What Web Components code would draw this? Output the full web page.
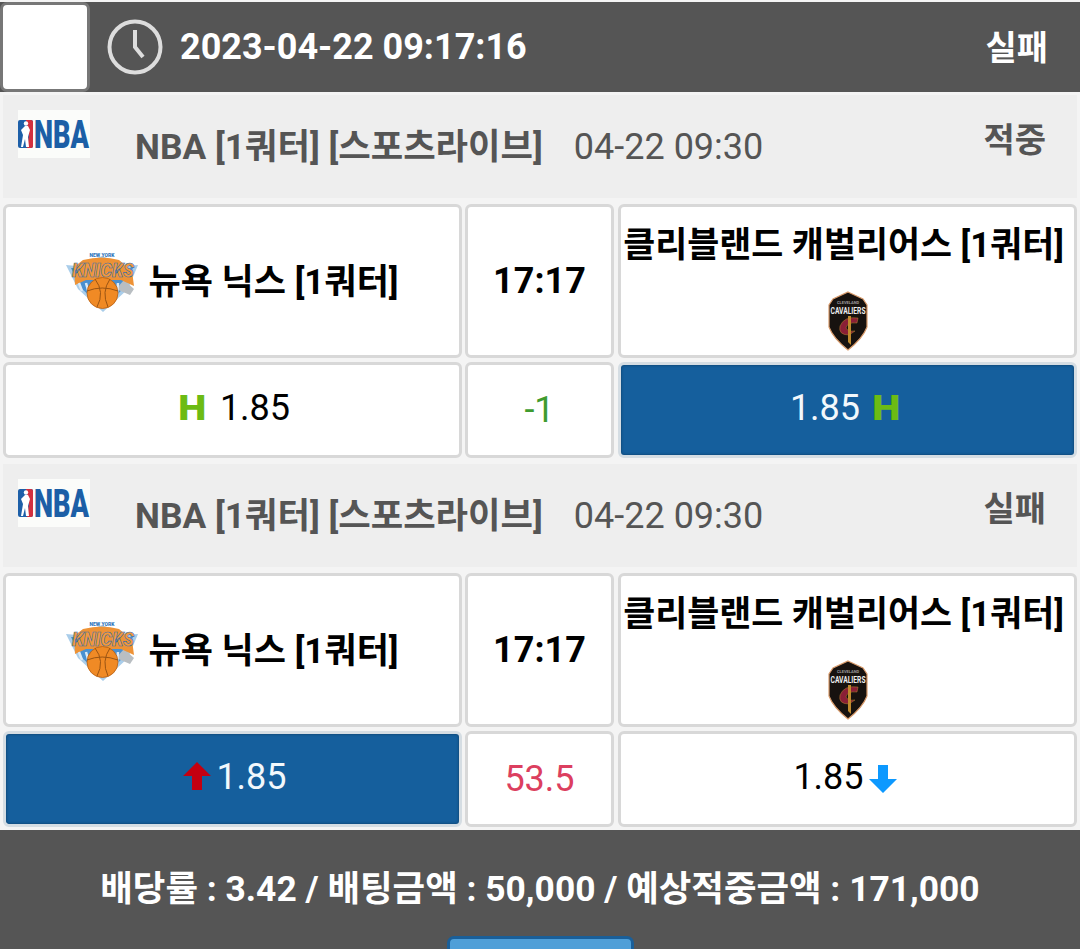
<!DOCTYPE html>
<html lang="ko">
<head>
<meta charset="utf-8">
<title>bet</title>
<style>
html, body { margin: 0; height: 949px; overflow: hidden; }
body {
  background: #f4f4f4;
  font-family: Roboto, "Noto Sans CJK KR", sans-serif;
  font-size: 35px;
}
</style>
</head>
<body>
<bet-header time="2023-04-22 09:17:16" status="실패"></bet-header>

<bet-game status="적중">
  <team-cell slot="home"><knicks-logo slot="logo"></knicks-logo>뉴욕 닉스 [1쿼터]</team-cell>
  <score-cell slot="mid" strong>17:17</score-cell>
  <team-cell slot="away" stacked><cavs-logo slot="logo"></cavs-logo>클리블랜드 캐벌리어스 [1쿼터]</team-cell>
  <odds-cell slot="odds-home"><mark-h></mark-h><span>1.85</span></odds-cell>
  <score-cell slot="odds-mid" color="#3f9b2f">-1</score-cell>
  <odds-cell slot="odds-away" selected><span>1.85</span><mark-h after></mark-h></odds-cell>
</bet-game>

<bet-game status="실패">
  <team-cell slot="home"><knicks-logo slot="logo"></knicks-logo>뉴욕 닉스 [1쿼터]</team-cell>
  <score-cell slot="mid" strong>17:17</score-cell>
  <team-cell slot="away" stacked><cavs-logo slot="logo"></cavs-logo>클리블랜드 캐벌리어스 [1쿼터]</team-cell>
  <odds-cell slot="odds-home" selected><mark-arrow dir="up"></mark-arrow><span>1.85</span></odds-cell>
  <score-cell slot="odds-mid" color="#dc3f5f">53.5</score-cell>
  <odds-cell slot="odds-away"><span>1.85</span><mark-arrow dir="down"></mark-arrow></odds-cell>
</bet-game>

<bet-footer>배당률 : 3.42 / 배팅금액 : 50,000 / 예상적중금액 : 171,000</bet-footer>

<script>
class BetHeader extends HTMLElement {
  constructor() {
    super();
    const shadowRoot = this.attachShadow({mode: 'open'});
    shadowRoot.innerHTML = `
<style>
:host {
  display: flex;
  align-items: center;
  box-sizing: border-box;
  height: 90px;
  margin-top: 2px;
  background-color: #555;
  color: #fff;
  font-weight: 700;
  padding-right: 32px;
}
#thumb {
  box-sizing: border-box;
  width: 90px;
  height: 90px;
  background: #fff;
  border: 3px solid #777;
  border-radius: 7px;
}
svg { margin-left: 16px; flex: none; }
#time { margin-left: 16px; flex: 1; font-size: 36px; }
#status { font-size: 34px; position: relative; top: -2px; }
</style>
<div id="thumb"></div>
<svg width="58" height="58" viewBox="0 0 58 58" fill="none" stroke="#ddd">
  <circle cx="29" cy="29" r="25.5" stroke-width="4"/>
  <path d="M29 12V29L37 39" stroke-width="4"/>
</svg>
<div id="time"></div>
<div id="status"></div>
`;
    shadowRoot.getElementById('time').textContent = this.getAttribute('time');
    shadowRoot.getElementById('status').textContent = this.getAttribute('status');
  }
}

class BetGame extends HTMLElement {
  constructor() {
    super();
    const shadowRoot = this.attachShadow({mode: 'open'});
    shadowRoot.innerHTML = `
<style>
:host { display: block; padding: 3px; }
#title {
  display: flex;
  box-sizing: border-box;
  height: 103px;
  background: #eee;
  color: #555;
  padding: 15px 31px 0 15px;
}
#name { font-weight: 700; margin-left: 45px; margin-top: 11px; line-height: 52px; font-size: 35.3px; }
#date { margin-left: 31px; margin-top: 11px; line-height: 52px; font-size: 36px; }
#status { margin-left: auto; font-weight: 700; font-size: 34px; line-height: 52px; margin-top: 4px; }
#grid {
  display: grid;
  grid-template-columns: 459px 148px 459px;
  grid-template-rows: 154px 96px;
  gap: 4px;
  margin-top: 6px;
}
</style>
<div id="title">
  <nba-logo></nba-logo>
  <div id="name">NBA [1쿼터] [스포츠라이브]</div>
  <div id="date">04-22 09:30</div>
  <div id="status"></div>
</div>
<div id="grid">
  <slot name="home"></slot>
  <slot name="mid"></slot>
  <slot name="away"></slot>
  <slot name="odds-home"></slot>
  <slot name="odds-mid"></slot>
  <slot name="odds-away"></slot>
</div>
`;
    shadowRoot.getElementById('status').textContent = this.getAttribute('status');
  }
}

const cellStyle = `
:host {
  display: flex;
  align-items: center;
  justify-content: center;
  box-sizing: border-box;
  background: #fff;
  border: 3px solid #d8d8d8;
  border-radius: 6px;
  color: #000;
  white-space: nowrap;
}
`;

class TeamCell extends HTMLElement {
  constructor() {
    super();
    const shadowRoot = this.attachShadow({mode: 'open'});
    shadowRoot.innerHTML = `
<style>
${cellStyle}
:host { font-weight: 700; gap: 10px; padding-bottom: 6px; }
::slotted([slot="logo"]) { margin-top: 8px; }
:host([stacked]) {
  flex-direction: column-reverse;
  justify-content: flex-end;
  gap: 26px;
  font-size: 34.8px;
  line-height: 40px;
  padding: 18px 8px 0 0;
}
:host([stacked]) ::slotted([slot="logo"]) { margin: 0 0 0 8px; }
</style>
<slot name="logo"></slot>
<slot></slot>
`;
  }
}

class ScoreCell extends HTMLElement {
  constructor() {
    super();
    const shadowRoot = this.attachShadow({mode: 'open'});
    shadowRoot.innerHTML = `
<style>
${cellStyle}
:host { font-size: 36px; margin-left: -1px; }
:host([strong]) { font-weight: 700; }
</style>
<slot></slot>
`;
    if (this.hasAttribute('color')) this.style.color = this.getAttribute('color');
  }
}

class OddsCell extends HTMLElement {
  constructor() {
    super();
    const shadowRoot = this.attachShadow({mode: 'open'});
    shadowRoot.innerHTML = `
<style>
${cellStyle}
:host { padding-bottom: 5px; font-size: 36px; }
:host([slot="odds-home"]) { padding-left: 5px; }
:host([slot="odds-away"]) { padding-right: 5px; }
:host([selected]) {
  background: #155f9d;
  color: #f2f8fc;
  border-color: #d5dde3;
  box-shadow: inset 0 0 3px #0c3a62;
}
</style>
<slot></slot>
`;
  }
}

class MarkH extends HTMLElement {
  constructor() {
    super();
    const shadowRoot = this.attachShadow({mode: 'open'});
    shadowRoot.innerHTML = `
<style>
:host {
  display: inline-block;
  width: 26px;
  margin: 0 17px 0 -3px;
  font: 700 34px "DejaVu Sans", sans-serif;
  color: #6cbb14;
  line-height: 1;
  transform: scaleX(1.07);
  transform-origin: left center;
}
:host([after]) { margin: 0 3px 0 11px; }
</style>
H`;
  }
}

class MarkArrow extends HTMLElement {
  constructor() {
    super();
    const up = this.getAttribute('dir') === 'up';
    const shadowRoot = this.attachShadow({mode: 'open'});
    shadowRoot.innerHTML = `
<style>
:host { display: inline-flex; margin: ${up ? '0 5px 0 0' : '0 0 0 5px'}; position: relative; top: ${up ? '-1px' : '2px'}; }
</style>
<svg width="28" height="28" viewBox="0 0 28 28">
  <path fill="${up ? '#c40010' : '#0d99ff'}" d="${up ? 'M14 0L28 14H19V28H9V14H0Z' : 'M14 28L28 14H19V0H9V14H0Z'}"/>
</svg>
`;
  }
}

class NbaLogo extends HTMLElement {
  constructor() {
    super();
    const shadowRoot = this.attachShadow({mode: 'open'});
    shadowRoot.innerHTML = `
<style>:host { display: block; width: 72px; height: 48px; flex: none; }</style>
<svg width="72" height="48" viewBox="0 0 72 48">
  <rect width="72" height="48" fill="#fbfcfa"/>
  <rect x="0" y="10" width="15" height="28" rx="2" fill="#1d5fa8"/>
  <path d="M8 10H13Q15 10 15 12V36Q15 38 13 38H9L11 25Z" fill="#d2303f"/>
  <circle cx="8" cy="13.5" r="2.2" fill="#fff"/>
  <path d="M3 20L7 16H10L12 20L10 27L11 37H8L7 29L5 37H3L5 25Z" fill="#fff"/>
  <text transform="translate(16 38) scale(1 1.5)" font-family="Roboto, sans-serif" font-weight="900" font-size="26" textLength="55" lengthAdjust="spacingAndGlyphs" fill="#1c5fa6">NBA</text>
</svg>
`;
  }
}

class KnicksLogo extends HTMLElement {
  constructor() {
    super();
    const shadowRoot = this.attachShadow({mode: 'open'});
    shadowRoot.innerHTML = `
<style>:host { display: block; width: 72px; height: 60px; flex: none; }</style>
<svg width="72" height="60" viewBox="0 0 72 60">
  <path d="M0 13L11 14L36 4L61 14L72 13L62 37L37 60L12 37Z" fill="#a9cdea"/>
  <path d="M5 16H67L58 36L37 56L15 36Z" fill="#4a90d0"/>
  <path d="M58 28L68 37L64 43L50 37Z" fill="#b9bec2"/>
  <path d="M8 15L17 8Q36 3 53 8L66 19L68 34L55 28H20L9 33Z" fill="#ee9235"/>
  <text x="36" y="5" text-anchor="middle" font-family="Roboto, sans-serif" font-weight="900" font-size="5" fill="#2f78bc">NEW YORK</text>
  <text transform="translate(37 25) scale(1 1.35)" text-anchor="middle" font-family="Roboto, sans-serif" font-weight="900" font-style="italic" font-size="15" textLength="62" lengthAdjust="spacingAndGlyphs" fill="#f2983c" stroke="#3a6fa5" stroke-width=".5">KNICKS</text>
  <path d="M13 31L16 39M20 31L23 42M26 31L28 44M52 31L51 42" stroke="#dbe9f5" stroke-width="2.5"/>
  <circle cx="36.5" cy="41" r="15.5" fill="#f08a25" stroke="#b65f14" stroke-width=".8"/>
  <path d="M21 39Q36 33 52 39M29 27Q39 40 31 55M44 27Q35 40 42 55" fill="none" stroke="#9a5413" stroke-width="1"/>
</svg>
`;
  }
}

class CavsLogo extends HTMLElement {
  constructor() {
    super();
    const shadowRoot = this.attachShadow({mode: 'open'});
    shadowRoot.innerHTML = `
<style>:host { display: block; width: 42px; height: 60px; flex: none; }</style>
<svg width="42" height="60" viewBox="0 0 42 60">
  <path d="M21 1L36 8L40 14V36Q36 47 21 59Q6 47 2 36V14L6 8Z" fill="#17120f" stroke="#d89a6a" stroke-width="1.2"/>
  <text x="21" y="13" text-anchor="middle" font-family="Roboto, sans-serif" font-size="4" fill="#9c9c9c">CLEVELAND</text>
  <text transform="translate(21 23) scale(1 1.4)" text-anchor="middle" font-family="Roboto, sans-serif" font-weight="700" font-size="7" textLength="35" lengthAdjust="spacingAndGlyphs" fill="#eee">CAVALIERS</text>
  <path d="M31 27Q17 25 13 35Q11 44 22 44L28 40Q21 41 19 37Q20 31 30 32Z" fill="#8a1f36" stroke="#b8862f" stroke-width=".5"/>
  <path d="M24 25V54L21 51V25Z" fill="#c08a2e"/>
</svg>
`;
  }
}

class BetFooter extends HTMLElement {
  constructor() {
    super();
    const shadowRoot = this.attachShadow({mode: 'open'});
    shadowRoot.innerHTML = `
<style>
:host {
  display: block;
  box-sizing: border-box;
  height: 119px;
  background: #555;
  color: #fff;
  font-weight: 700;
  font-size: 35.4px;
  text-align: center;
  padding-top: 38px;
  overflow: hidden;
}
#text { line-height: 42px; }
#btn {
  box-sizing: border-box;
  width: 187px;
  height: 50px;
  margin: 26px auto 0 447px;
  background: #4f9fd8;
  border: 3px solid #1a5f99;
  border-radius: 7px;
}
</style>
<div id="text"><slot></slot></div>
<div id="btn"></div>
`;
  }
}

customElements.define('bet-header', BetHeader);
customElements.define('bet-game', BetGame);
customElements.define('team-cell', TeamCell);
customElements.define('score-cell', ScoreCell);
customElements.define('odds-cell', OddsCell);
customElements.define('mark-h', MarkH);
customElements.define('mark-arrow', MarkArrow);
customElements.define('nba-logo', NbaLogo);
customElements.define('knicks-logo', KnicksLogo);
customElements.define('cavs-logo', CavsLogo);
customElements.define('bet-footer', BetFooter);
</script>
</body>
</html>
